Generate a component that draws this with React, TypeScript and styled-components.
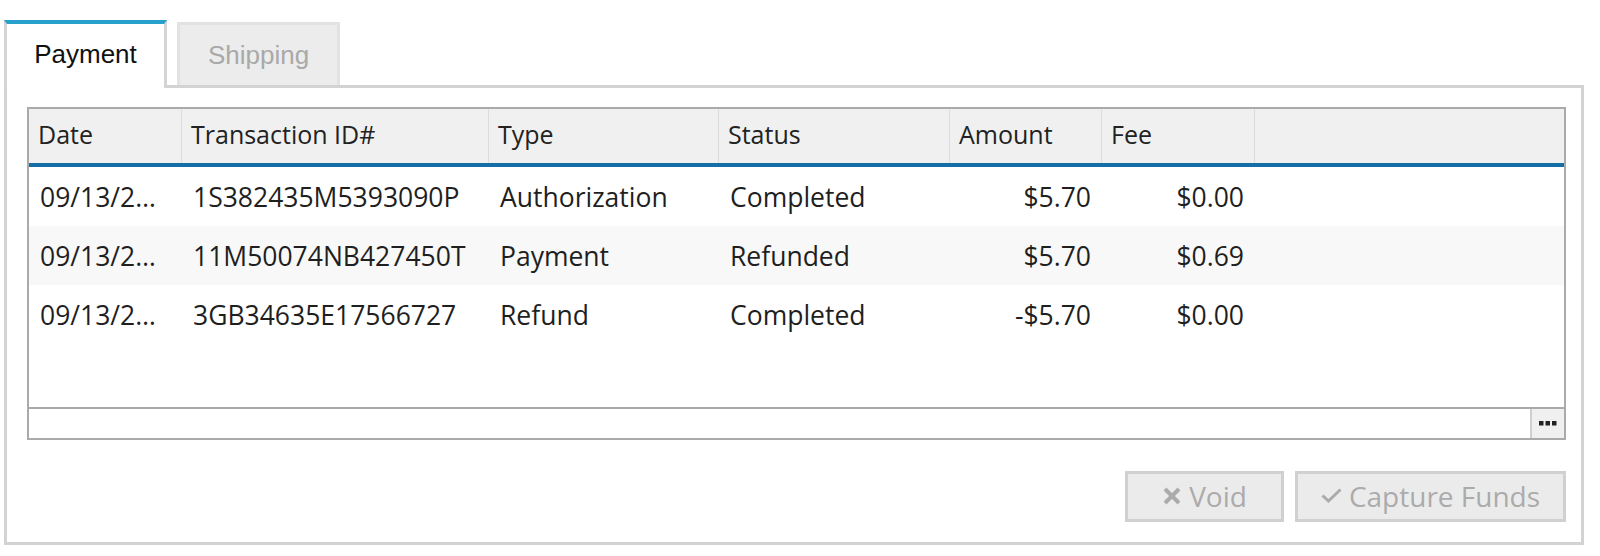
import * as React from 'react';
import styled, { createGlobalStyle } from 'styled-components';

const GlobalStyle = createGlobalStyle`
  html, body {
    margin: 0;
    padding: 0;
    background: #fff;
  }
  body {
    font-family: 'Open Sans', 'Noto Sans', sans-serif;
    color: #222;
  }
`;

const Page = styled.div`
  padding: 20px 0 0 4px;
  width: 1580px;
`;

const TabBar = styled.div`
  display: flex;
  align-items: flex-end;
  gap: 10px;
  height: 68px;
  margin-bottom: -3px;
  position: relative;
  z-index: 1;
`;

const Tab = styled.div<{ active?: boolean }>`
  box-sizing: border-box;
  width: 163px;
  height: ${({ active }) => (active ? '68px' : '63px')};
  margin-bottom: ${({ active }) => (active ? '0' : '3px')};
  display: flex;
  align-items: center;
  justify-content: center;
  font-family: 'Liberation Sans', Arial, sans-serif;
  font-size: 26px;
  color: ${({ active }) => (active ? '#111' : '#a9a9a9')};
  background: ${({ active }) => (active ? '#fff' : '#ececec')};
  border: 3px solid ${({ active }) => (active ? '#d4d4d4' : '#e2e2e2')};
  border-top: ${({ active }) => (active ? '4px solid #27a1cb' : '3px solid #e2e2e2')};
  border-bottom: none;
  padding-bottom: ${({ active }) => (active ? '4px' : '0')};
`;

const Panel = styled.div`
  box-sizing: border-box;
  width: 1580px;
  height: 460px;
  border: 3px solid #d3d3d3;
  padding: 19px 15px 0 20px;
  display: flex;
  flex-direction: column;
`;

const Grid = styled.div`
  box-sizing: border-box;
  height: 333px;
  border: 2px solid #aaa;
  display: flex;
  flex-direction: column;
`;

const cols = '153px 307px 230px 231px 152px 153px 1fr';

const HeaderRow = styled.div`
  display: grid;
  grid-template-columns: ${cols};
  height: 54px;
  background: #f0f0f0;
  border-bottom: 4px solid #156ea6;
`;

const HeaderCell = styled.div<{ last?: boolean }>`
  display: flex;
  align-items: center;
  padding: 0 0 4px 9px;
  font-size: 25px;
  color: #222;
  white-space: nowrap;
  border-right: ${({ last }) => (last ? 'none' : '1px solid #dcdcdc')};
`;

const Body = styled.div`
  flex: 1;
`;

const Row = styled.div<{ alt?: boolean }>`
  display: grid;
  grid-template-columns: ${cols};
  height: 59px;
  background: ${({ alt }) => (alt ? '#f8f8f8' : '#fff')};
`;

const Cell = styled.div<{ right?: boolean }>`
  display: flex;
  align-items: center;
  justify-content: ${({ right }) => (right ? 'flex-end' : 'flex-start')};
  padding: ${({ right }) => (right ? '0 11px 0 0' : '0 0 0 11px')};
  font-size: 26.5px;
  color: #1f1f1f;
  white-space: nowrap;
  overflow: hidden;
`;

const Footer = styled.div`
  height: 29px;
  border-top: 2px solid #aaa;
  display: flex;
  justify-content: flex-end;
`;

const MoreButton = styled.div`
  box-sizing: border-box;
  width: 34px;
  height: 100%;
  background: #f0f0f0;
  border-left: 2px solid #cfcfcf;
  display: flex;
  align-items: center;
  justify-content: center;
`;

const Actions = styled.div`
  display: flex;
  justify-content: flex-end;
  gap: 11px;
  margin-top: 31px;
`;

const ActionButton = styled.div<{ w: number }>`
  box-sizing: border-box;
  width: ${({ w }) => w}px;
  height: 51px;
  border: 3px solid #d0d0d0;
  background: #ebebeb;
  color: #ababab;
  font-size: 28px;
  display: flex;
  align-items: center;
  justify-content: center;
  gap: 7px;
  padding-bottom: 2px;
`;

const rows = [
  { date: '09/13/2…', id: '1S382435M5393090P', type: 'Authorization', status: 'Completed', amount: '$5.70', fee: '$0.00' },
  { date: '09/13/2…', id: '11M50074NB427450T', type: 'Payment', status: 'Refunded', amount: '$5.70', fee: '$0.69' },
  { date: '09/13/2…', id: '3GB34635E17566727', type: 'Refund', status: 'Completed', amount: '-$5.70', fee: '$0.00' },
];

const Dots = () => (
  <svg width="18" height="5" viewBox="0 0 18 5">
    <rect x="0" y="0" width="4.5" height="4.5" fill="#222" />
    <rect x="6.5" y="0" width="4.5" height="4.5" fill="#222" />
    <rect x="13" y="0" width="4.5" height="4.5" fill="#222" />
  </svg>
);

const XIcon = () => (
  <svg width="20" height="20" viewBox="0 0 20 20">
    <path d="M3 3 L17 17 M17 3 L3 17" stroke="#ababab" strokeWidth="4" strokeLinecap="butt" />
  </svg>
);

const CheckIcon = () => (
  <svg width="21" height="15" viewBox="0 0 21 15">
    <path d="M1.5 7.5 L7.5 13 L19.5 1.5" stroke="#ababab" strokeWidth="3" fill="none" />
  </svg>
);

export default function App() {
  return (
    <Page>
      <GlobalStyle />
      <TabBar>
        <Tab active>Payment</Tab>
        <Tab>Shipping</Tab>
      </TabBar>
      <Panel>
        <Grid>
          <HeaderRow>
            <HeaderCell>Date</HeaderCell>
            <HeaderCell>Transaction ID#</HeaderCell>
            <HeaderCell>Type</HeaderCell>
            <HeaderCell>Status</HeaderCell>
            <HeaderCell>Amount</HeaderCell>
            <HeaderCell>Fee</HeaderCell>
            <HeaderCell last />
          </HeaderRow>
          <Body>
            {rows.map((r, i) => (
              <Row key={r.id} alt={i % 2 === 1}>
                <Cell>{r.date}</Cell>
                <Cell>{r.id}</Cell>
                <Cell>{r.type}</Cell>
                <Cell>{r.status}</Cell>
                <Cell right>{r.amount}</Cell>
                <Cell right>{r.fee}</Cell>
                <Cell />
              </Row>
            ))}
          </Body>
          <Footer>
            <MoreButton>
              <Dots />
            </MoreButton>
          </Footer>
        </Grid>
        <Actions>
          <ActionButton w={159}>
            <XIcon />
            Void
          </ActionButton>
          <ActionButton w={271}>
            <CheckIcon />
            Capture Funds
          </ActionButton>
        </Actions>
      </Panel>
    </Page>
  );
}
